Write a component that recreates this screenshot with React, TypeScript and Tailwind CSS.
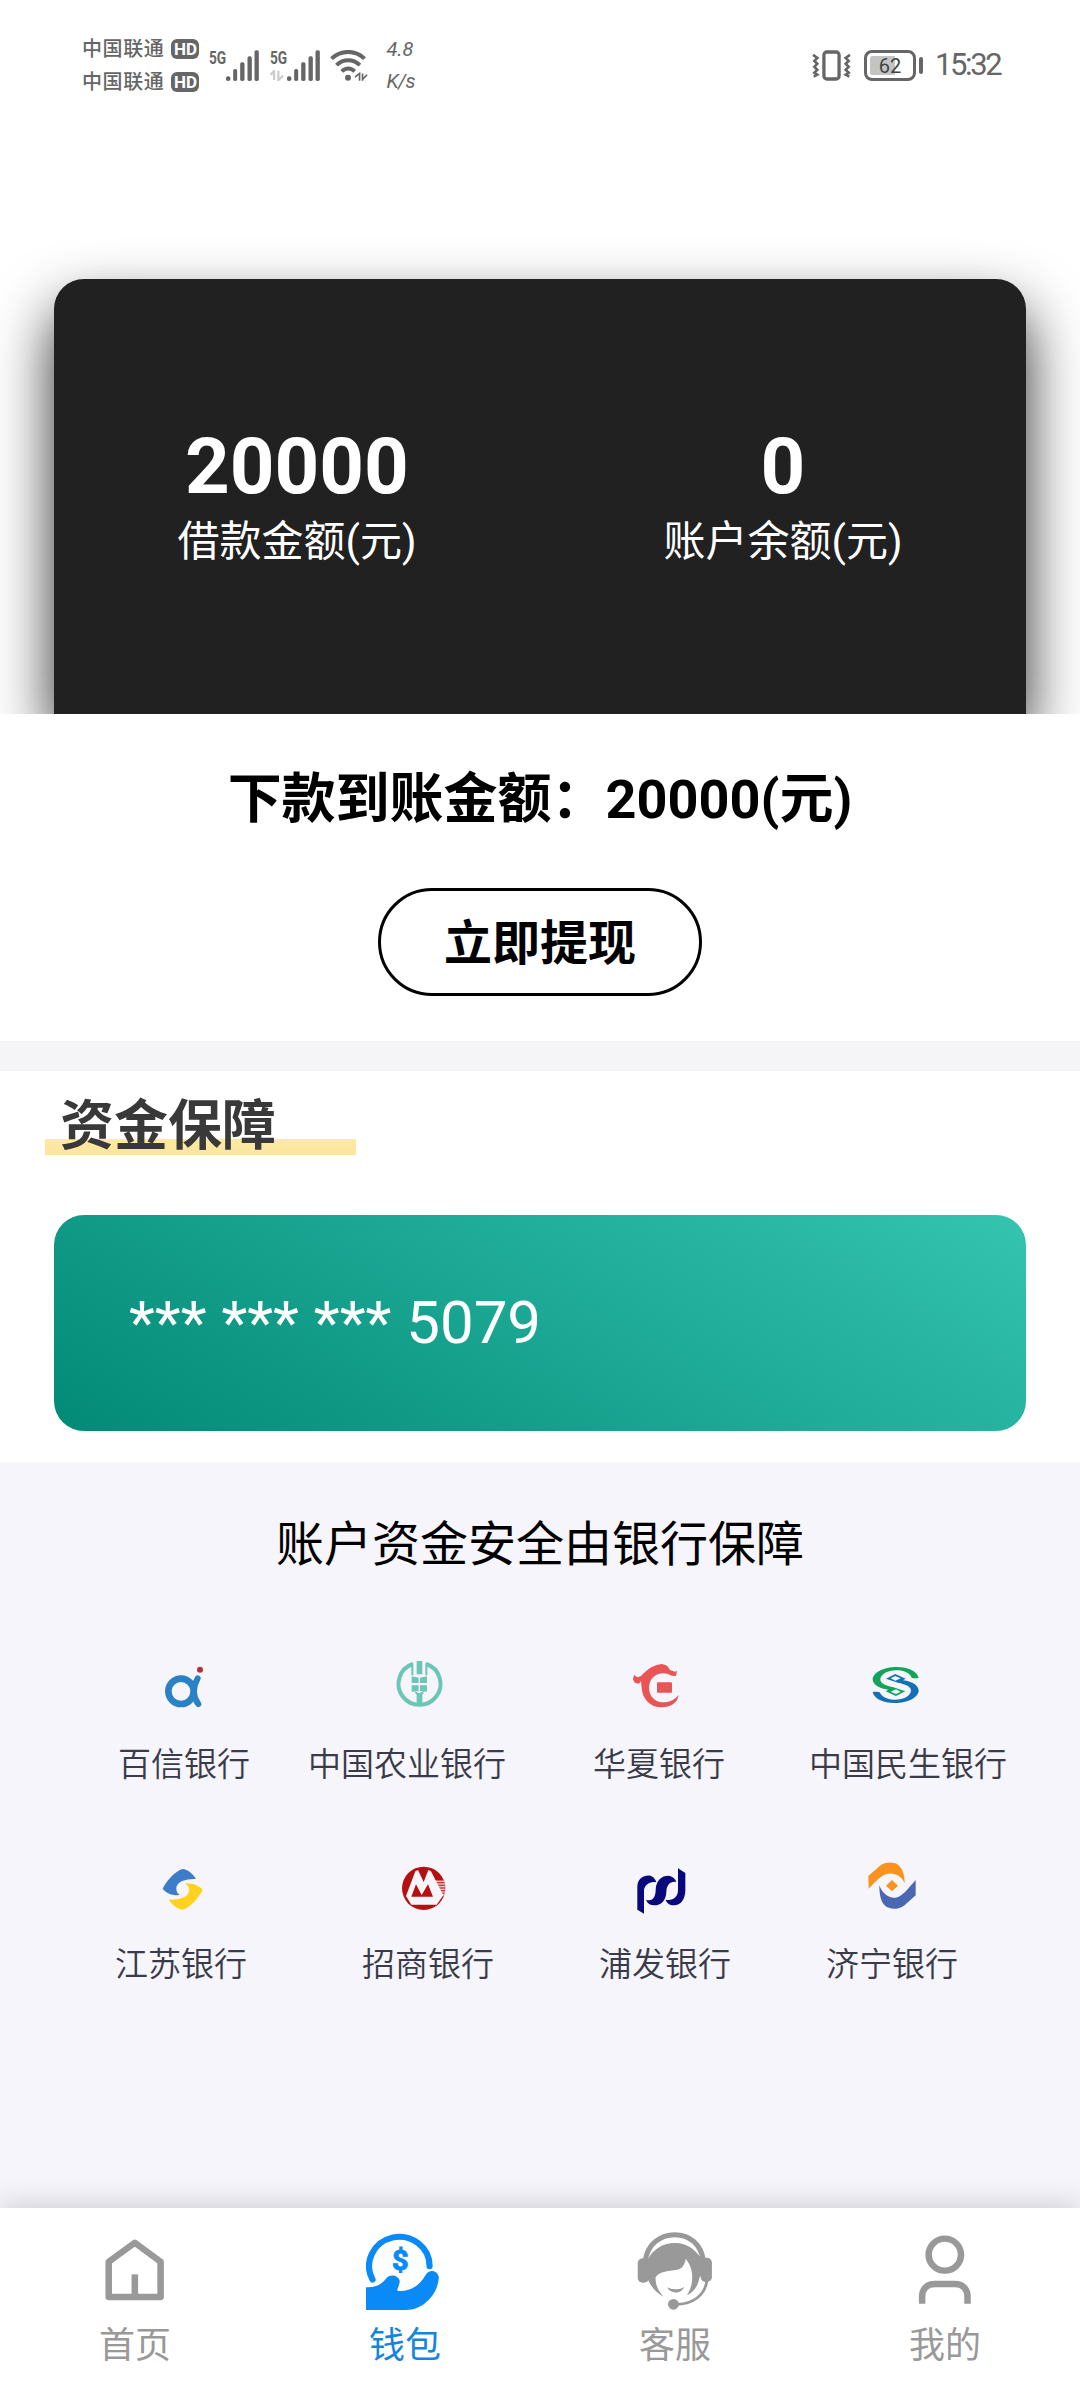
import type { ReactNode } from "react";

const SignalBars = () => (
  <svg viewBox="503 85 98 93" className="w-[33px] h-[31px]" fill="#666">
    <circle cx="509" cy="171" r="7" />
    <rect x="524" y="142" width="12" height="36" rx="5" />
    <rect x="545" y="122" width="13" height="56" rx="5" />
    <rect x="567" y="104" width="13" height="74" rx="5" />
    <rect x="588" y="86" width="13" height="92" rx="5" />
  </svg>
);

const WifiIcon = () => (
  <svg viewBox="813 85 114 94" className="w-[38px] h-[31px]" fill="none" stroke="#666" strokeWidth="12">
    <path d="M817 111 C845 84 890 84 917 111" />
    <path d="M832 131 C853 111 882 111 903 131" />
    <path d="M848 150 C860 138 876 138 887 150" />
    <circle cx="867" cy="169" r="9" fill="#666" stroke="none" />
    <path d="M888 167 L902 156 V178 M911 156 V178 M911 174 L925 160" strokeWidth="5" />
  </svg>
);

const VibrateIcon = () => (
  <svg viewBox="104 55 116 94" className="w-[39px] h-[31px]" fill="none" stroke="#666">
    <rect x="139" y="61" width="46" height="82" rx="9" strokeWidth="10" />
    <path d="M106 70 L119 79 L110 88 L119 97 L110 106 L119 115 L110 124 L119 130 L108 136" strokeWidth="8" />
    <path d="M218 70 L205 79 L214 88 L205 97 L214 106 L205 115 L214 124 L205 130 L216 136" strokeWidth="8" />
  </svg>
);

const Carrier = () => (
  <div className="flex items-center h-[33px]">
    <span className="text-[20px] leading-[30px] tracking-[0.6px] font-medium">中国联通</span>
    <span className="ml-[7px] w-[28px] h-[20px] rounded-[6px] bg-[#666] text-white text-[17px] leading-[20px] font-bold text-center">
      HD
    </span>
  </div>
);

const NetworkType = () => (
  <div className="origin-left scale-x-[0.76] text-[18px] leading-[16px] font-bold">5G</div>
);

const StatusBar = () => (
  <div className="flex items-center h-[130px] pl-[82px] pr-[77px] text-[#666]">
    <div>
      <Carrier />
      <Carrier />
    </div>
    <div className="flex items-start ml-[10px] h-[31px]">
      <div className="w-[17px]">
        <NetworkType />
      </div>
      <SignalBars />
      <div className="ml-[11px] w-[17px]">
        <NetworkType />
        <svg viewBox="636 145 42 34" className="w-[14px] h-[11px] mt-[4px]" fill="none" stroke="#ccc" strokeWidth="7">
          <path d="M637 160 L648 148 V176 M661 147 V176 L676 163" />
        </svg>
      </div>
      <SignalBars />
      <div className="ml-[10px]">
        <WifiIcon />
      </div>
    </div>
    <div className="ml-[18px] text-[20px] leading-[32px] italic">
      <div>4.8</div>
      <div className="tracking-[-0.5px]">K/s</div>
    </div>
    <div className="ml-auto flex items-center">
      <VibrateIcon />
      <div className="ml-[13px] w-[52px] h-[31px] border-[3px] border-[#666] rounded-[8px] p-[3px]">
        <div className="h-full bg-[linear-gradient(90deg,#c4c4c4_62%,transparent_62%)] rounded-[2px] text-[20px] leading-[20px] text-center text-[#444]">
          62
        </div>
      </div>
      <div className="ml-[3px] w-[4px] h-[17px] rounded-full bg-[#666]" />
      <div className="ml-[12px] w-[68px] text-[31px] leading-[32px] tracking-[-2.4px]">15:32</div>
    </div>
  </div>
);

// half of the Minsheng mark, the other half is the same shape turned 180°
const minshengHalf =
  "M1076 114 C1064 115 1060 115 1055 113 C1048 98 1030 91 1012 91 C985 90 962 102 961 118 C961 132 980 138 1000 142 L1036 154 L1008 168 L977 154 L985 149 C955 146 938 132 938 118 C939 98 970 81 1010 81 C1045 81 1072 94 1076 114Z M1008 148 L992 155 L1008 162 L1022 155Z";

type Bank = {
  name: string;
  cell: string;
  icon: string;
  viewBox: string;
  art: ReactNode;
};

const banksTop: Bank[] = [
  {
    name: "百信银行",
    cell: "ml-[118px]",
    icon: "ml-[36px]",
    viewBox: "162 45 180 180",
    art: (
      <g fill="none" stroke="#2a82c4" strokeWidth="18" strokeLinecap="round">
        <circle cx="243" cy="154" r="38" strokeWidth="20" />
        <path d="M293 115 C278 142 276 166 295 192" />
        <circle cx="300" cy="89" r="9" fill="#b5303f" stroke="none" />
      </g>
    ),
  },
  {
    name: "中国农业银行",
    cell: "ml-[58px]",
    icon: "ml-[81px]",
    viewBox: "867 45 180 180",
    art: (
      <g fill="#6cc5b5">
        <path
          d="M938 72 A63 63 0 1 0 979 72"
          fill="none"
          stroke="#6cc5b5"
          strokeWidth="12"
        />
        <path d="M934 68 H940 V106 H934Z M976 68 H982 V106 H976Z" />
        <path d="M950 63 H967 V103 H950Z" />
        <path d="M935 109 L956 113 V129 H935Z M981 109 L960 113 V129 H981Z" />
        <path d="M935 136 H956 V154 H950 L935 155Z M981 136 H960 V154 H966 L981 155Z" />
        <path d="M943 153 L957 160 L973 153 L967 166 V198 H950 V166Z" />
      </g>
    ),
  },
  {
    name: "华夏银行",
    cell: "ml-[87px]",
    icon: "ml-[33px]",
    viewBox: "198 45 180 180",
    art: (
      <g fill="#e95555">
        <path d="M305 72 L314 74 L322 78 L330 90 L345 95 L351 92 L348 108 L335 107 C306 89 268 104 267 143 C267 171 288 187 310 187 C330 187 345 178 356 165 C353 188 332 202 305 202 C270 202 247 176 245 143 L243 124 L236 131 L224 128 L219 118 L222 105 L232 112 L242 109 C254 98 270 76 305 72Z" />
        <rect x="291" y="127" width="45" height="31" rx="3" />
      </g>
    ),
  },
  {
    name: "中国民生银行",
    cell: "ml-[84px]",
    icon: "ml-[57px]",
    viewBox: "918 45 180 180",
    art: (
      <g fillRule="evenodd">
        <path fill="#13a45c" d={minshengHalf} />
        <path fill="#1470b4" transform="rotate(180 1007 135)" d={minshengHalf} />
      </g>
    ),
  },
];

const banksBottom: Bank[] = [
  {
    name: "江苏银行",
    cell: "ml-[115px]",
    icon: "ml-[38px]",
    viewBox: "159 45 180 180",
    art: (
      <g>
        <path
          fill="#3d7cc9"
          d="M248 87 C262 88 278 100 288 117 C258 116 232 124 229 143 C228 154 233 161 240 165 C220 167 200 162 188 146 C196 128 225 92 248 87Z"
        />
        <path
          fill="#ffd21f"
          transform="rotate(180 248 148)"
          d="M248 87 C262 88 278 100 290 117 C258 116 232 124 229 143 C228 154 233 161 240 165 C220 167 200 162 188 146 C196 128 225 92 248 87Z"
        />
      </g>
    ),
  },
  {
    name: "招商银行",
    cell: "ml-[115px]",
    icon: "ml-[32px]",
    viewBox: "882 45 180 180",
    art: (
      <g>
        <circle cx="971" cy="145" r="65" fill="#b3100f" />
        <path
          d="M1003 124 H1034 M1006 132 H1036 M1009 140 H1037 M1012 148 H1037 M1016 156 H1036 M1020 164 H1034"
          stroke="#f0c0c4"
          strokeWidth="5"
        />
        <path
          fill="#f8f5fa"
          d="M918 168 L946 94 L954 90 L971 126 L985 90 L993 94 L1030 166 L1010 194 H934Z"
        />
        <path fill="#b3100f" d="M934 170 L948 133 L965 165 L984 133 L999 170Z" />
      </g>
    ),
  },
  {
    name: "浦发银行",
    cell: "ml-[105px]",
    icon: "ml-[32px]",
    viewBox: "213 45 180 180",
    art: (
      <g fill="#08087c">
        <path d="M232 209 V140 C232 115 252 105 270 107 C280 109 287 118 289 127 C270 122 254 135 252 150 V221Z" />
        <path d="M258 179 C278 186 287 170 287 150 C288 120 305 107 325 107 C338 108 347 118 349 126 C330 123 320 136 319 155 C318 182 303 196 283 196 C270 196 262 190 258 179Z" />
        <path d="M354 85 L376 99 V150 C376 178 362 196 342 196 C328 196 320 189 317 179 C337 184 354 172 354 150Z" />
      </g>
    ),
  },
  {
    name: "济宁银行",
    cell: "ml-[95px]",
    icon: "ml-[36px]",
    viewBox: "906 45 180 180",
    art: (
      <g>
        <path
          fill="#f7931e"
          d="M925 108 L960 77 C975 66 1000 64 1015 75 C1030 88 1034 110 1034 130 C1025 108 1005 98 985 101 C965 104 950 120 926 146Z"
        />
        <path
          fill="#4a67b2"
          transform="rotate(180 996 137)"
          d="M925 108 L960 77 C975 66 1000 64 1015 75 C1030 88 1034 110 1034 138 C1025 113 1005 98 985 101 C965 104 950 126 925 154Z"
        />
        <path fill="#f7931e" d="M996 120 L1014 137 L996 154 L978 137Z" />
      </g>
    ),
  },
];

const BankRow = ({ banks }: { banks: Bank[] }) => (
  <div className="flex">
    {banks.map((bank) => (
      <div key={bank.name} className={`${bank.cell} shrink-0`}>
        <svg viewBox={bank.viewBox} className={`${bank.icon} w-[60px] h-[60px]`}>
          {bank.art}
        </svg>
        <p className="mt-[30px] text-[33px] leading-[40px] font-[350] text-[#3a3a48] whitespace-nowrap">
          {bank.name}
        </p>
      </div>
    ))}
  </div>
);

const tabs = [
  {
    label: "首页",
    active: false,
    viewBox: "279 126 227 234",
    art: (
      <g fill="none" stroke="#999" strokeWidth="19" strokeLinejoin="round">
        <path d="M316 215 L392 158 L467 215 V321 H316Z" />
        <path d="M392 253 V321" />
      </g>
    ),
  },
  {
    label: "钱包",
    active: true,
    viewBox: "1063 126 227 234",
    art: (
      <g fill="#0a8af6">
        <path
          d="M1082 269 A88 88 0 1 1 1248 229"
          fill="none"
          stroke="#0a8af6"
          strokeWidth="18"
          strokeLinecap="round"
        />
        <path d="M1063 292 C1090 292 1106 285 1121 266 C1132 250 1157 255 1161 272 C1162 285 1152 297 1155 303 C1190 306 1218 288 1237 254 C1247 236 1272 240 1275 262 C1273 310 1232 360 1180 360 H1063Z" />
        <text
          x="1163"
          y="239"
          fontSize="84"
          fontWeight="700"
          textAnchor="middle"
          stroke="#0a8af6"
          strokeWidth="3"
        >
          $
        </text>
      </g>
    ),
  },
  {
    label: "客服",
    active: false,
    viewBox: "279 126 227 234",
    art: (
      <g fill="#999">
        <path
          d="M306 212 C313 162 350 134 392 134 C434 134 468 162 475 212"
          fill="none"
          stroke="#999"
          strokeWidth="15"
        />
        <rect x="284" y="205" width="33" height="73" rx="15" />
        <rect x="467" y="203" width="33" height="73" rx="15" />
        <path d="M310 215 C325 180 355 159 392 159 C428 159 455 180 473 212 V250 L464 262 C460 285 450 305 427 316 C447 285 450 240 424 206 C420 225 415 234 400 239 C370 243 345 245 336 262 C335 285 345 305 359 320 C335 308 320 285 310 260Z" />
        <path d="M370 292 C382 300 408 300 419 290 C412 313 378 313 370 292Z" />
        <path d="M485 273 C480 315 445 341 400 343" fill="none" stroke="#999" strokeWidth="8" />
        <circle cx="388" cy="343" r="16" />
      </g>
    ),
  },
  {
    label: "我的",
    active: false,
    viewBox: "1063 126 227 234",
    art: (
      <g fill="none" stroke="#999" strokeWidth="19">
        <ellipse cx="1176" cy="194" rx="47" ry="48" />
        <path d="M1110 341 V320 C1110 295 1125 282 1147 282 H1205 C1228 282 1242 297 1242 320 V341" />
      </g>
    ),
  },
];

const WalletPage = () => {
  return (
    <div className="w-[1080px] h-[2388px] flex flex-col bg-white overflow-hidden font-[Roboto,'Noto_Sans_CJK_SC',sans-serif]">
      <StatusBar />

      {/* 额度卡片 */}
      <div className="h-[584px] pt-[149px] px-[54px] overflow-hidden">
        <div className="h-full flex rounded-t-[30px] bg-[#212121] text-white text-center shadow-[0_30px_60px_rgba(0,0,0,0.84)]">
          <div className="flex-1 pt-[142px]">
            <p className="text-[78px] leading-[92px] font-bold">20000</p>
            <p className="text-[42px] leading-[58px]">借款金额(元)</p>
          </div>
          <div className="flex-1 pt-[142px]">
            <p className="text-[78px] leading-[92px] font-bold">0</p>
            <p className="text-[42px] leading-[58px]">账户余额(元)</p>
          </div>
        </div>
      </div>

      {/* 提现 */}
      <div className="relative h-[327px] flex flex-col items-center bg-white text-black font-bold">
        <p className="mt-[46px] text-[54px] leading-[80px]">下款到账金额：20000(元)</p>
        <button className="mt-[48px] w-[324px] h-[108px] pt-[3px] border-[3px] border-black rounded-full text-[48px] leading-[72px] font-bold">
          立即提现
        </button>
      </div>

      <div className="h-[30px] bg-[#f5f5f8]" />

      {/* 资金保障 */}
      <div className="h-[391px] px-[54px] pt-[16px]">
        <h2 className="w-[311px] -ml-[9px] pl-[15px] text-[54px] leading-[80px] font-bold text-[#393939] bg-[linear-gradient(#ffe9a3,#fae6a0)] bg-no-repeat bg-[length:311px_16px] bg-[position:0_52px]">
          资金保障
        </h2>
        <div className="mt-[48px] h-[216px] rounded-[30px] flex items-center pl-[75px] bg-[linear-gradient(30deg,#028a76,#34c4b0)] text-white text-[60px]">
          *** *** *** 5079
        </div>
      </div>

      {/* 合作银行 */}
      <div className="flex-1 bg-[#f5f5fb]">
        <h3 className="pt-[47px] text-[48px] leading-[72px] text-center text-black">
          账户资金安全由银行保障
        </h3>
        <div className="mt-[74px] flex flex-col gap-[70px]">
          <BankRow banks={banksTop} />
          <BankRow banks={banksBottom} />
        </div>
      </div>

      {/* 底部导航 */}
      <nav className="relative h-[180px] flex bg-white shadow-[0_0_30px_rgba(0,0,0,0.2)]">
        {tabs.map((tab) => (
          <div
            key={tab.label}
            className={`flex-1 flex flex-col items-center pt-[24px] ${
              tab.active ? "text-[#1684dd]" : "text-[#999]"
            }`}
          >
            <svg viewBox={tab.viewBox} preserveAspectRatio="none" className="w-[78px] h-[78px]">
              {tab.art}
            </svg>
            <span className="mt-[12px] text-[36px] leading-[48px]">{tab.label}</span>
          </div>
        ))}
      </nav>
    </div>
  );
};

export default WalletPage;
